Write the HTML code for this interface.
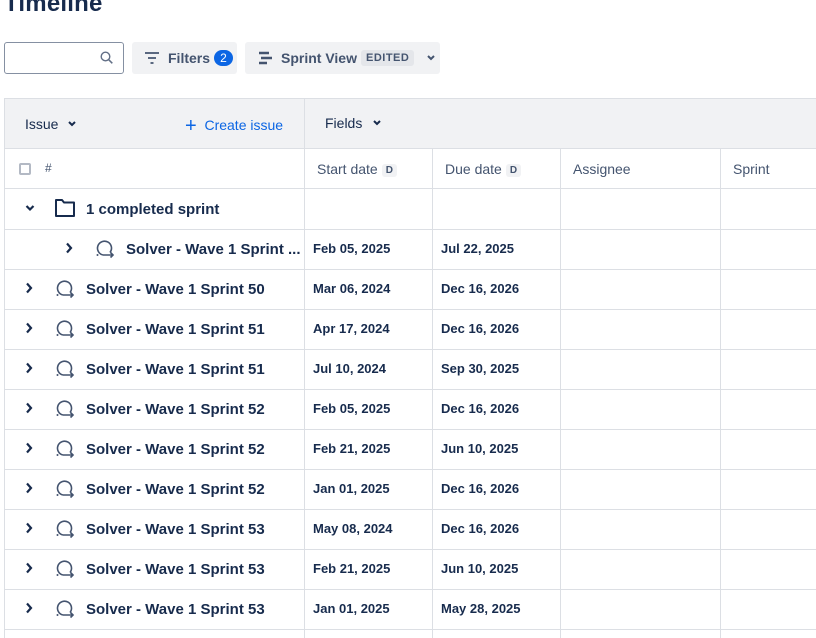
<!DOCTYPE html>
<html><head><meta charset="utf-8"><style>
*{box-sizing:border-box;margin:0;padding:0}
body{width:816px;height:631px;overflow:hidden;background:#fff;font-family:"Liberation Sans",sans-serif;color:#172b4d;position:relative}
.abs{position:absolute}
h1{position:absolute;left:4px;top:-10px;font-size:24px;font-weight:bold;color:#172b4d;letter-spacing:0.2px}
.search{left:4px;top:42px;width:120px;height:32px;border:1px solid #8590a2;border-radius:3px}
.btn{top:42px;height:32px;background:#f1f2f4;border-radius:3px;font-size:14px;font-weight:bold;color:#44546f;display:flex;align-items:center}
.hdr{left:4px;top:98px;width:812px;height:50px;background:#f1f2f4}
.hl{position:absolute;background:#dcdfe4;height:1px;left:4px;width:812px}
.vl{position:absolute;background:#dcdfe4;width:1px}
.t{position:absolute;font-size:14px;white-space:nowrap}
.b{font-weight:bold;color:#172b4d}
.n{font-size:15px;font-weight:bold;color:#172b4d}
.d{display:inline-block;background:#f1f2f4;border-radius:3px;font-size:10px;font-weight:bold;color:#44546f;padding:1px 4px;margin-left:4px;vertical-align:1px}
</style></head><body>
<h1>Timeline</h1>
<div class="abs search"><svg class="abs" style="left:95px;top:8px" width="14" height="14" viewBox="0 0 14 14"><circle cx="5.5" cy="5.5" r="4.3" fill="none" stroke="#626f86" stroke-width="1.4"/><path d="M8.8 8.8l3.5 3.5" stroke="#626f86" stroke-width="1.5"/></svg></div>
<div class="abs btn" style="left:132px;width:105px">
<svg style="margin-left:12px" width="16" height="14" viewBox="0 0 16 14"><path d="M1 2h14M4 7h8M6.5 12h3" stroke="#44546f" stroke-width="1.8"/></svg>
<span style="margin-left:8px">Filters</span><span style="margin-left:4px;background:#0c66e4;color:#fff;border-radius:9px;width:19px;height:16px;font-size:12px;text-align:center;line-height:16px;font-weight:normal">2</span></div>
<div class="abs btn" style="left:245px;width:195px">
<svg style="margin-left:13px" width="15" height="16" viewBox="0 0 15 16"><path d="M1 3h10M3 8h11M1 13h8" stroke="#44546f" stroke-width="2.4"/></svg>
<span style="margin-left:8px">Sprint View</span><span style="margin-left:4px;background:#e4e6ea;font-size:11px;padding:2px 5px;border-radius:3px;letter-spacing:.5px">EDITED</span>
<svg style="margin-left:12px" width="10" height="8" viewBox="0 0 10 8"><path d="M2 2l3 3 3-3" stroke="#44546f" stroke-width="2" fill="none"/></svg></div>

<div class="abs hdr"></div>
<div class="hl" style="top:98px"></div>
<div class="hl" style="top:148px"></div>
<div class="vl" style="left:4px;top:98px;height:540px"></div>
<div class="vl" style="left:304px;top:98px;height:540px"></div>
<div class="vl" style="left:432px;top:148px;height:490px"></div>
<div class="vl" style="left:560px;top:148px;height:490px"></div>
<div class="vl" style="left:720px;top:148px;height:490px"></div>

<div class="t" style="left:25px;top:116px;font-weight:500;color:#172b4d">Issue</div>
<svg class="abs" style="left:67px;top:120px" width="10" height="8" viewBox="0 0 10 8"><path d="M2 2l3 3 3-3" stroke="#172b4d" stroke-width="2" fill="none"/></svg>
<div class="t" style="left:185px;top:115px;color:#0c66e4;font-size:14px"><span style="font-size:20px;vertical-align:-2px;font-weight:300">+</span>&nbsp; Create issue</div>
<div class="t" style="left:325px;top:115px;font-weight:500">Fields</div>
<svg class="abs" style="left:372px;top:119px" width="10" height="8" viewBox="0 0 10 8"><path d="M2 2l3 3 3-3" stroke="#172b4d" stroke-width="2" fill="none"/></svg>

<div class="abs" style="left:19px;top:163px;width:12px;height:12px;border:2px solid #b3b9c4;border-radius:2px"></div>
<div class="t" style="left:45px;top:161px;font-size:12px;color:#44546f">#</div>
<div class="t" style="left:317px;top:161px;color:#44546f">Start date<span class="d">D</span></div>
<div class="t" style="left:445px;top:161px;color:#44546f">Due date<span class="d">D</span></div>
<div class="t" style="left:573px;top:161px;color:#44546f">Assignee</div>
<div class="t" style="left:733px;top:161px;color:#44546f">Sprint</div>

<div class="hl" style="top:188px"></div>
<svg class="abs" style="left:25px;top:204px" width="10" height="8" viewBox="0 0 10 8"><path d="M1.5 2l3.5 3.5 3.5-3.5" stroke="#172b4d" stroke-width="2.2" fill="none"/></svg>
<svg class="abs" style="left:54px;top:198px" width="22" height="20" viewBox="0 0 22 20"><path d="M2 2h6l2 2.5h10v13.5h-18z" fill="none" stroke="#172b4d" stroke-width="2" stroke-linejoin="round"/></svg>
<div class="t n" style="left:86px;top:201px">1 completed sprint</div>
<div class="hl" style="top:229px"></div>
<div id="rows"></div>
<script>
var rows=[[1,"Solver - Wave 1 Sprint ...","Feb 05, 2025","Jul 22, 2025"],[0,"Solver - Wave 1 Sprint 50","Mar 06, 2024","Dec 16, 2026"],[0,"Solver - Wave 1 Sprint 51","Apr 17, 2024","Dec 16, 2026"],[0,"Solver - Wave 1 Sprint 51","Jul 10, 2024","Sep 30, 2025"],[0,"Solver - Wave 1 Sprint 52","Feb 05, 2025","Dec 16, 2026"],[0,"Solver - Wave 1 Sprint 52","Feb 21, 2025","Jun 10, 2025"],[0,"Solver - Wave 1 Sprint 52","Jan 01, 2025","Dec 16, 2026"],[0,"Solver - Wave 1 Sprint 53","May 08, 2024","Dec 16, 2026"],[0,"Solver - Wave 1 Sprint 53","Feb 21, 2025","Jun 10, 2025"],[0,"Solver - Wave 1 Sprint 53","Jan 01, 2025","May 28, 2025"]];
var h="";
rows.forEach(function(r,i){var top=229+i*40,o=r[0]?40:0;
h+='<svg class="abs" style="left:'+(25+o)+'px;top:'+(top+13)+'px" width="8" height="12" viewBox="0 0 8 12"><path d="M2 1.5l4 4.5-4 4.5" stroke="#172b4d" stroke-width="2.2" fill="none"/></svg>';
h+='<svg class="abs" style="left:'+(54+o)+'px;top:'+(top+9)+'px" width="24" height="22" viewBox="0 0 24 22"><path d="M16 14.5A7 7 0 1 0 9 17" fill="none" stroke="#44546f" stroke-width="1.6"/><path d="M9 17h10M16.5 14.5l2.5 2.5-2.5 2.5" fill="none" stroke="#44546f" stroke-width="1.6"/><circle cx="3.5" cy="17" r="1" fill="#44546f"/></svg>';
h+='<div class="t n" style="left:'+(86+o)+'px;top:'+(top+12)+'px">'+r[1]+'</div>';
h+='<div class="t b" style="left:313px;top:'+(top+12)+'px;font-size:13px">'+r[2]+'</div>';
h+='<div class="t b" style="left:441px;top:'+(top+12)+'px;font-size:13px">'+r[3]+'</div>';
h+='<div class="hl" style="top:'+(top+40)+'px"></div>';});
document.getElementById("rows").innerHTML=h;
</script>
</body></html>
